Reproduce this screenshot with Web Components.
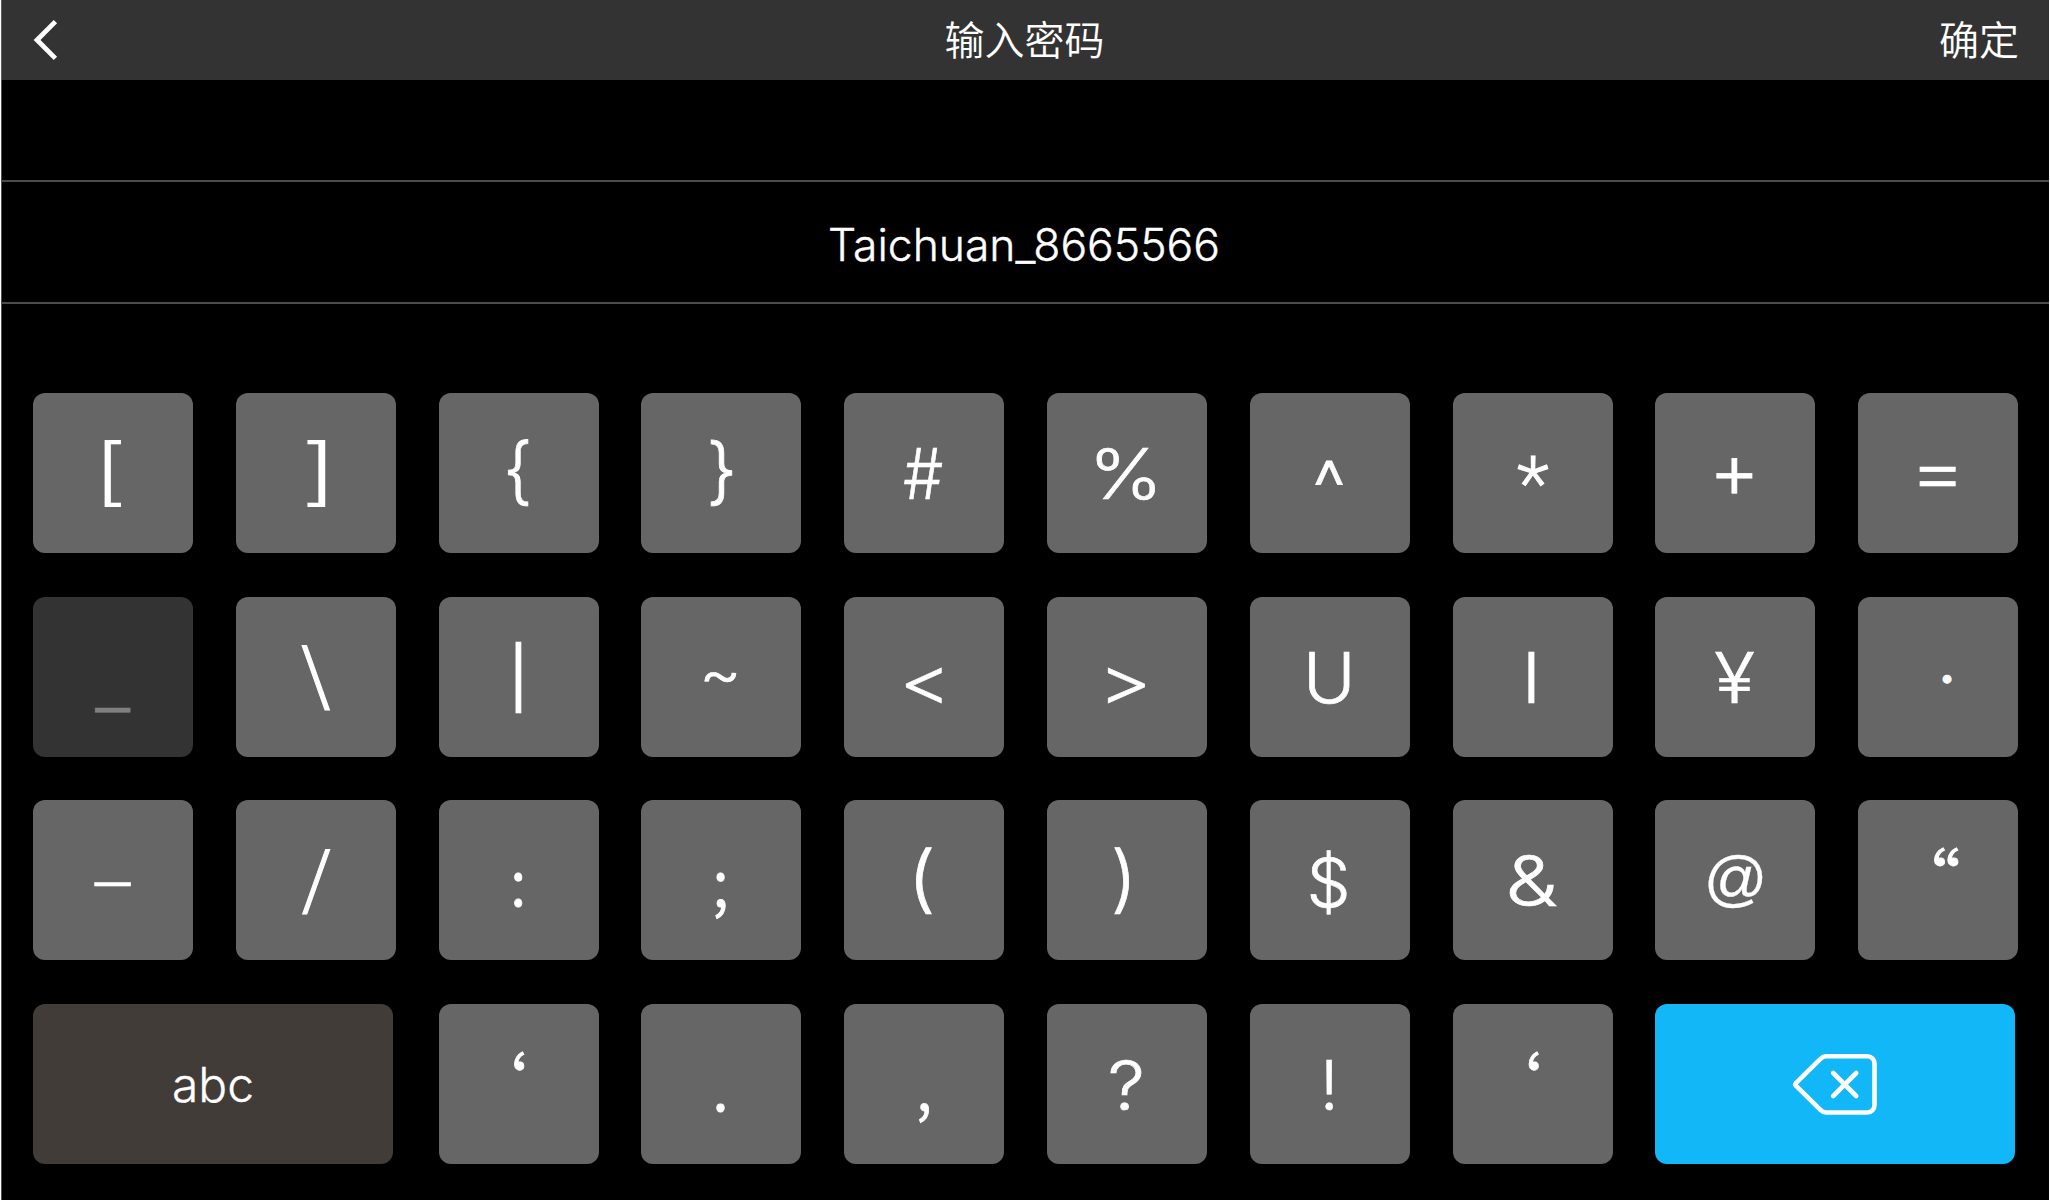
<!DOCTYPE html>
<html lang="zh-CN">
<head>
<meta charset="utf-8">
<title>输入密码</title>
<style>
  html, body { margin: 0; width: 2050px; height: 1200px; overflow: hidden; background: #fff; }
</style>
</head>
<body>
<password-screen></password-screen>

<template id="screen-tpl">
  <style>
    :host { display: flex; flex-direction: column; box-sizing: border-box; width: 2048px; height: 1200px; margin-left: 1px;
      background: #000; color: #fff; font-family: Inter, "Noto Sans CJK SC", sans-serif; font-weight: 300; overflow: hidden;
      box-shadow: inset 1px 0 #4b5152; }
    .keys { display: flex; flex-direction: column; gap: 44px; padding: 89px 0 0 32px; }
    .row { display: flex; gap: 42.8px; }
    .row:nth-child(3) { margin-top: -1px; }
    .row.last { gap: 45.6px; }
    .row.last .mid { display: flex; gap: 42.8px; }
  </style>
  <title-bar><span>输入密码</span><span slot="action">确定</span></title-bar>
  <password-field>Taichuan_8665566</password-field>
  <div class="keys"></div>
</template>

<template id="bar-tpl">
  <style>
    :host { display: grid; grid-template-columns: 1fr auto 1fr; align-items: center; flex: none; height: 80px; box-sizing: border-box;
      padding: 0 30px 0 29px; background: #333; box-shadow: inset 1px 0 #5a5c5c;
      font: 350 40px/76px "Noto Sans CJK SC", sans-serif; }
    svg { display: block; margin-left: 3px; }
    .title, .action { height: 80px; }
    .action { text-align: right; }
  </style>
  <svg width="26" height="42" viewBox="0 0 26 42" fill="none" stroke="#fff" stroke-width="4.8"><path d="M22.4 2.6 4 21l18.4 18.4"/></svg>
  <div class="title"><slot></slot></div>
  <div class="action"><slot name="action"></slot></div>
</template>

<template id="field-tpl">
  <style>
    :host { display: block; flex: none; box-sizing: border-box; height: 124px; margin-top: 100px; padding-right: 2px;
      border-top: 2px solid #4c4c4c; border-bottom: 2px solid #4c4c4c;
      text-align: center; font-size: 44.4px; line-height: 127px; -webkit-text-stroke: .4px #fff; }
  </style>
  <slot></slot>
</template>

<template id="key-tpl">
  <style>
    :host { display: grid; place-content: center; flex: none; width: 160px; height: 160px; border-radius: 12px; background: #666; }
    :host([kind="pressed"]) { background: #333; color: #808080; }
    :host([kind="mode"]) { width: 360px; background: #423c38; font-size: 48px; line-height: 161px; -webkit-text-stroke: .3px #fff; }
    :host([kind="delete"]) { width: 360px; background: #11b7f7; }
    .glyph { display: block; white-space: pre; line-height: 90px; font-size: 70.5px; }
    ::slotted(svg) { display: block; }
  </style>
  <slot></slot>
</template>

<script>
const stamp = (host, id) => {
  const root = host.attachShadow({ mode: 'open' });
  root.append(document.getElementById(id).content.cloneNode(true));
  return root;
};

customElements.define('title-bar', class extends HTMLElement {
  connectedCallback() { stamp(this, 'bar-tpl'); }
});

customElements.define('password-field', class extends HTMLElement {
  connectedCallback() { stamp(this, 'field-tpl'); }
});

const FONTS = {
  i: { family: 'Inter', weight: 300, stroke: .7 },
  p: { family: 'Inter', weight: 300, stroke: 0 },
  r: { family: 'Roboto', weight: 300, stroke: .9 },
  n: { family: '"Noto Sans CJK SC"', weight: 350, stroke: .9 },
  l: { family: '"Liberation Sans"', weight: 400, stroke: .3 }
};
const ctx = document.createElement('canvas').getContext('2d');

// A key whose symbol is optically placed: "fit" holds dx, dy (from the key's centre), width and height of the ink.
customElements.define('key-cap', class extends HTMLElement {
  connectedCallback() {
    const root = stamp(this, 'key-tpl');
    const sign = this.getAttribute('sign');
    if (!sign) return;
    const [dx, dy, w, h] = this.getAttribute('fit').split(' ').map(Number);
    const font = FONTS[this.getAttribute('face')];
    const span = document.createElement('span');
    span.className = 'glyph';
    span.textContent = sign;
    span.style.fontFamily = font.family + ', sans-serif';
    span.style.fontWeight = font.weight;
    const s = font.stroke;
    if (s) span.style.webkitTextStroke = s + 'px currentColor';
    root.querySelector('slot').replaceWith(span);

    ctx.font = `${font.weight} 705px ${font.family}`;
    const m = ctx.measureText(sign);
    const l = -m.actualBoundingBoxLeft / 10, r = m.actualBoundingBoxRight / 10;
    const a = m.actualBoundingBoxAscent / 10, d = m.actualBoundingBoxDescent / 10;
    ctx.font = `${font.weight} 70.5px ${font.family}`;
    const f = ctx.measureText(sign);
    const base = (Math.round(f.fontBoundingBoxAscent) - Math.round(f.fontBoundingBoxDescent)) / 2;
    const sx = w / (r - l + s), sy = h / (a + d + s);
    const ox = (l + r) / 2 - m.width / 20, oy = base + (d - a) / 2;
    span.style.transform = `translate(${dx - sx * ox}px, ${dy + .5 - sy * oy}px) scale(${sx}, ${sy})`;
  }
});

const ROWS = [
  [['[', 'p', '-.1 0 18.2 68'], [']', 'p', '0 0 18.2 68'], ['{', 'i', '-.6 0 21.8 68'], ['}', 'i', '-.2 0 21.8 68'],
   ['#', 'i', '-.9 .1 39 52'], ['%', 'i', '-1.2 .1 60.5 54'], ['^', 'i', '-1.2 -1 28.5 26'], ['*', 'r', '-.2 -1.8 32.6 32'],
   ['+', 'i', '-.5 3.5 37.2 37'], ['=', 'i', '-1 3.5 37.2 21']],
  [['_', 'i', '.1 33.4 36 5', 'pressed'], ['\\', 'r', '0 0 30 66'], ['|', 'i', '-.6 0 6 72'], ['~', 'i', '-.6 0 33 11.3'],
   ['<', 'i', '-.8 7.3 37 37'], ['>', 'i', '-.5 7.3 37 37'], ['U', 'i', '-.7 .5 42 53'], ['I', 'i', '-.6 .3 6.5 52'],
   ['¥', 'i', '-.3 .3 39.4 52'], ['·', 'n', '8.7 1.8 9.4 9.4']],
  [['–', 'i', '0 4.3 36.4 5'], ['/', 'r', '0 1 30 66'], [':', 'n', '-.3 9.3 9.1 35'], [';', 'n', '-1.1 15.2 11.1 46.7'],
   ['(', 'i', '-.3 .8 16 68'], [')', 'i', '-5.4 .8 16 68'], ['$', 'i', '-1.3 1.4 36.7 66.5'], ['&', 'i', '-.1 .8 47.8 54'],
   ['@', 'l', '-.2 .8 54.3 54'], ['“', 'n', '8.1 -23.2 25 20']]
];
const LAST = [['‘', 'n', '.7 -23.1 11 20.3'], ['.', 'n', '-1.1 22.8 9.4 9.5'], [',', 'n', '-.5 28.4 10.8 20.7'],
  ['?', 'i', '-.9 .7 32 53.3'], ['!', 'i', '-.8 1 8.8 52'], ['‘', 'n', '1.3 -23.1 11 20.3']];

const esc = t => t.replace(/&/g, '&amp;').replace(/</g, '&lt;').replace(/"/g, '&quot;');
const cap = ([sign, face, fit, kind = 'plain']) => `<key-cap sign="${esc(sign)}" face="${face}" fit="${fit}" kind="${kind}"></key-cap>`;

customElements.define('password-screen', class extends HTMLElement {
  connectedCallback() {
    stamp(this, 'screen-tpl').querySelector('.keys').innerHTML =
      ROWS.map(r => `<div class="row">${r.map(cap).join('')}</div>`).join('') +
      `<div class="row last"><key-cap kind="mode">abc</key-cap><div class="mid">${LAST.map(cap).join('')}<key-cap kind="delete">
        <svg width="86" height="62" viewBox="0 0 86 62" fill="none" stroke="#fff" stroke-width="4.6" stroke-linejoin="round" stroke-linecap="round">
          <path d="M34 3.300h41.300a7.200 7.200 0 0 1 7.200 7.200v41.800a7.200 7.200 0 0 1-7.200 7.200H34q-3 0-5.300-2.300L3.600 32.400q-1-1 0-2L28.700 5.600Q31 3.300 34 3.300Z"/>
          <path d="M41.200 20 64.200 43M64.200 20 41.200 43"/>
        </svg></key-cap></div></div>`;
  }
});
</script>
</body>
</html>
